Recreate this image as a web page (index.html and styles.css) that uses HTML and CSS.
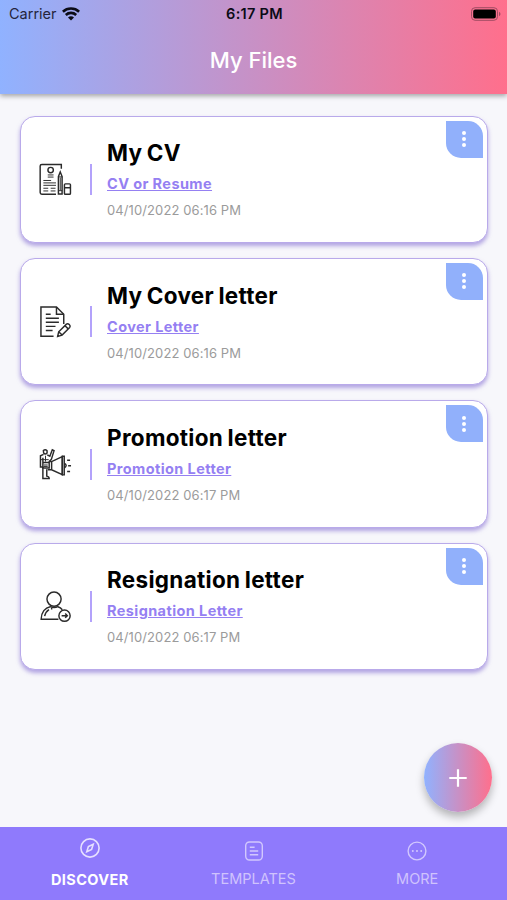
FILE: index.html
```html
<!DOCTYPE html>
<html lang="en">
<head>
    <meta charset="UTF-8">
    <meta name="viewport" content="width=device-width, initial-scale=1.0">
    <title>My Files</title>
    <link rel="stylesheet" href="styles.css">
</head>
<body>

    <header class="header">
        <div class="status">
            <div class="carrier">
                <span>Carrier</span>
                <svg width="18" height="14" viewBox="0 0 18 14" fill="none" stroke="#0b0b16" stroke-width="2.6">
                    <path d="M0.9 4.7C5.4 0.5 12.6 0.5 17.1 4.7"/>
                    <path d="M3.8 8C6.8 5.2 11.2 5.2 14.2 8"/>
                    <path d="M9 13.4L6 10.4C7.7 8.9 10.3 8.9 12 10.4Z" fill="#0b0b16" stroke="none"/>
                </svg>
            </div>
            <div class="time">6:17 PM</div>
            <div class="battery">
                <svg width="30" height="14" viewBox="0 0 30 14">
                    <rect x="0.5" y="0.7" width="26" height="12.6" rx="3.6" fill="none" stroke="#a04c62"/>
                    <rect x="2.2" y="2.4" width="22.6" height="9.2" rx="2" fill="#000"/>
                    <path d="M28 4.8C30 5.6 30 8.4 28 9.2Z" fill="#a04c62"/>
                </svg>
            </div>
        </div>
        <h1 class="title">My Files</h1>
    </header>

    <main class="files">
        <div class="card">
            <!-- resume with pencil and eraser -->
            <svg class="icon" viewBox="0 0 34 34">
                <path d="M17.5 32.3H3Q1.2 32.3 1.2 30.5V3Q1.2 1.5 3 1.5H23V6"/>
                <circle cx="12" cy="7.3" r="2.8"/>
                <path class="thin" d="M9 12.3h6M9 14.5h6M4.5 18h8M4.5 20.5h13M4.5 23h13M4.5 26h5M12 26h5M4.5 28.8h5M12 28.8h5"/>
                <path d="M20 14L21.9 9.3L23.8 14V32H20Z"/>
                <path class="thin" d="M20 14.3h4M21.9 15V28M20 28.5h4"/>
                <rect x="26.2" y="21.5" width="6.2" height="10.8" rx="1"/>
                <path d="M26.2 25.5h6.2"/>
            </svg>
            <div class="line"></div>
            <div class="info">
                <h2>My CV</h2>
                <a href="#">CV or Resume</a>
                <p>04/10/2022 06:16 PM</p>
            </div>
            <div class="menu"><i></i><i></i><i></i></div>
        </div>

        <div class="card">
            <!-- page with pencil -->
            <svg class="icon" viewBox="0 0 34 34">
                <path d="M15 32.2H2V2H18L25.5 9.5V19.5"/>
                <path d="M18 2V9.5H25.5"/>
                <path d="M7 9.5h5M7 13.7h13.5M7 17.8h13.5M7 22h10M7 26.3h7"/>
                <path d="M19.2 32.3L20.3 27.6L28.3 19.7Q29.6 18.6 31.2 20.1Q32.8 21.7 31.6 23.1L23.8 31Z"/>
                <path d="M20.3 27.6L23.8 31M26.8 21.3L30.1 24.6"/>
            </svg>
            <div class="line"></div>
            <div class="info">
                <h2>My Cover letter</h2>
                <a href="#">Cover Letter</a>
                <p>04/10/2022 06:16 PM</p>
            </div>
            <div class="menu"><i></i><i></i><i></i></div>
        </div>

        <div class="card">
            <!-- person with megaphone -->
            <svg class="icon" viewBox="0 0 34 34">
                <path d="M4.5 2.6Q6.5 0.8 8.3 2.8V5.2Q6.5 7.2 4.8 5.2Z"/>
                <path d="M4.7 6.5L1.5 8V19.5H4V31.5H10.5Q10.5 29.5 8 29V22"/>
                <path d="M8.5 7L11.2 8.5L13.7 1.8L15.5 2.8L12.8 11.5L10.5 14V20.5H4V10M4 15H10.5"/>
                <path class="thin" d="M6.7 8V14M2 12H10M5 17.5H9M5 19H9"/>
                <path d="M10.5 14H13L24 8.8V27.4L13 22.5H9M13 14V22.5"/>
                <path d="M24 8.5H26V27.7H24ZM26 15.5Q30 18 26 20.7"/>
                <path d="M29 12.7h3M30 18.3h3M29 24.2h3"/>
            </svg>
            <div class="line"></div>
            <div class="info">
                <h2>Promotion letter</h2>
                <a href="#">Promotion Letter</a>
                <p>04/10/2022 06:17 PM</p>
            </div>
            <div class="menu"><i></i><i></i><i></i></div>
        </div>

        <div class="card">
            <!-- person leaving -->
            <svg class="icon" viewBox="0 0 34 34">
                <circle cx="15.5" cy="9.4" r="7.3"/>
                <path d="M20 30.2H2.2C2.2 23 6.5 18 11.5 17.2Q15.5 19 19.5 17.2Q22.3 18 24 20.3"/>
                <path d="M5.8 27Q6.6 22.5 10.3 20.2M12.3 19.3h1.5"/>
                <circle cx="26.3" cy="26.5" r="5.8"/>
                <path d="M23.3 26.5H29M27 24.3L29.2 26.5L27 28.7"/>
            </svg>
            <div class="line"></div>
            <div class="info">
                <h2>Resignation letter</h2>
                <a href="#">Resignation Letter</a>
                <p>04/10/2022 06:17 PM</p>
            </div>
            <div class="menu"><i></i><i></i><i></i></div>
        </div>
    </main>

    <div class="add">
        <svg width="18" height="18" viewBox="0 0 18 18" stroke="#fff" stroke-width="2.2">
            <path d="M9 0.3V17.7M0.3 9H17.7"/>
        </svg>
    </div>

    <nav class="nav">
        <div class="tab active">
            <svg width="20" height="20" viewBox="0 0 20 20">
                <circle cx="10" cy="10" r="9.1"/>
                <path d="M13.2 6.3L11.6 11.4L6.8 13.7L8.4 8.6Z"/>
            </svg>
            <span>DISCOVER</span>
        </div>
        <div class="tab">
            <svg width="20" height="20" viewBox="0 0 20 20">
                <rect x="1.7" y="1" width="16.6" height="18" rx="3.8"/>
                <path d="M5.8 6.2h4.8M5.8 10h8.4M5.8 13.8h8.4"/>
            </svg>
            <span>TEMPLATES</span>
        </div>
        <div class="tab">
            <svg width="20" height="20" viewBox="0 0 20 20">
                <circle cx="10" cy="10" r="8.9"/>
                <path class="dots" d="M5.8 10h0M10 10h0M14.2 10h0"/>
            </svg>
            <span>MORE</span>
        </div>
    </nav>

</body>
</html>
```
FILE: styles.css
```css
* {
    box-sizing: border-box;
}

body {
    margin: 0;
    height: 900px;
    display: flex;
    flex-direction: column;
    overflow: hidden;
    background-color: #f7f7fb;
    font-family: Inter, "Liberation Sans", sans-serif;
}

.header {
    height: 94px;
    flex: none;
    background: linear-gradient(to right, #90b2ff, #ff6f8c);
    box-shadow: 0 2px 5px rgba(0, 0, 0, 0.35);
}

.status {
    display: grid;
    grid-template-columns: 1fr auto 1fr;
    align-items: center;
    height: 27px;
    padding: 0 7px 0 9px;
    font-size: 14.5px;
    color: #0b0b16;
}

.carrier {
    display: flex;
    align-items: center;
    gap: 5px;
    color: #25253c;
}

.time {
    font-weight: 600;
    letter-spacing: 0.3px;
}

.battery {
    display: flex;
    justify-content: flex-end;
    margin-right: -1px;
}

.title {
    margin: 17px 0 0;
    text-align: center;
    font-size: 22px;
    line-height: 32px;
    font-weight: 500;
    color: #fff;
}

.files {
    flex: 1;
    display: flex;
    flex-direction: column;
    gap: 14.9px;
    padding: 21.5px 19.5px 0 20px;
}

.card {
    position: relative;
    display: flex;
    align-items: center;
    height: 127.5px;
    padding-left: 18px;
    border: 1px solid #b9aaea;
    border-radius: 15px;
    background-color: #fff;
    box-shadow: 0 3px 4px rgba(120, 95, 205, 0.55);
}

.icon {
    width: 33px;
    height: 33px;
    fill: none;
    stroke: #2b2b2b;
    stroke-width: 1.5;
}

.icon .thin {
    stroke-width: 1;
}

.line {
    width: 2px;
    height: 31px;
    margin: 0 15px 0 18px;
    background-color: #b3a2fb;
}

.info h2 {
    margin: 0;
    font-size: 22.5px;
    line-height: 28px;
    font-weight: 650;
    letter-spacing: 0.3px;
    word-spacing: -1.2px;
    color: #000;
}

.info a {
    display: block;
    margin-top: 7px;
    font-size: 14.5px;
    line-height: 20px;
    font-weight: 650;
    letter-spacing: 0.4px;
    color: #9580f2;
}

.info p {
    margin: 7px 0 0;
    font-size: 13px;
    line-height: 18px;
    letter-spacing: 0.1px;
    color: #9b9b9b;
}

.menu {
    position: absolute;
    top: 4px;
    right: 4px;
    width: 37px;
    height: 37px;
    display: flex;
    flex-direction: column;
    align-items: center;
    justify-content: center;
    gap: 2px;
    border-radius: 0 15px 0 15px;
    background-color: #91b0fb;
}

.menu i {
    width: 4px;
    height: 4px;
    border-radius: 50%;
    background-color: #fff;
}

.add {
    position: absolute;
    right: 15px;
    bottom: 88px;
    width: 68px;
    height: 69px;
    display: flex;
    align-items: center;
    justify-content: center;
    border-radius: 50%;
    background: linear-gradient(to right, #90b2ff, #ff6f8c);
    box-shadow: 0 5px 9px rgba(0, 0, 0, 0.28);
}

.nav {
    position: relative;
    flex: none;
    height: 73px;
    padding: 0 8px;
    display: flex;
    background-color: #8f7afc;
}

.tab {
    flex: 1;
    display: flex;
    flex-direction: column;
    align-items: center;
    padding-top: 14px;
    font-size: 14.5px;
    color: #cfc3fc;
}

.tab svg {
    fill: none;
    stroke: #d2c8fd;
    stroke-width: 1.4;
}

.tab .dots {
    stroke-width: 2;
    stroke-linecap: round;
}

.tab span {
    margin-top: 8px;
    line-height: 20px;
}

.active {
    padding-top: 11px;
    font-weight: 700;
    letter-spacing: 0.4px;
    color: #fff;
}

.active svg {
    stroke: #e6e0ff;
    stroke-width: 1.6;
}

.active span {
    margin-top: 12px;
}
```
